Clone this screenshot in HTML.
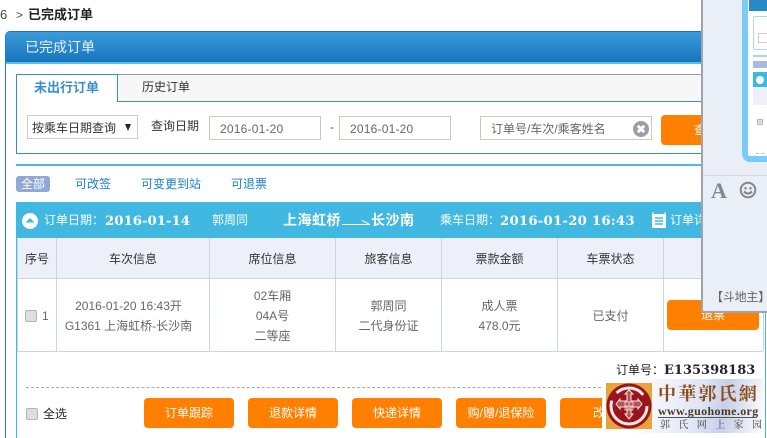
<!DOCTYPE html>
<html lang="zh"><head><meta charset="utf-8"><style>
html,body{margin:0;padding:0;background:#fff}
#p{position:relative;width:767px;height:438px;overflow:hidden;background:#fff;font:12px/16px "Liberation Sans","WenQuanYi Zen Hei","Noto Sans CJK SC",sans-serif;color:#333}
#p div,#p span.a{position:absolute;box-sizing:border-box;white-space:nowrap}
.t{height:16px;line-height:16px;text-align:center}
.g{color:#666}
.btn{background:#ff8000;color:#fff;border-radius:4px;text-align:center;height:30px;line-height:30px;width:90px;top:398px}
.line{background:#c4d8e6}
.inp{border:1px solid #ccc9c2;background:#fff;color:#666;height:24px;line-height:24px;top:116px}
.b{font-family:"DejaVu Serif",serif;font-weight:bold;font-size:13.300px}
.cb{width:12px;height:12px;border:1px solid #b4b4b4;border-radius:2px;background:#dedede}
</style></head><body><div id="p">

<div style="left:0;top:7px;color:#444;font-size:13px">6</div>
<div style="left:16px;top:7px;color:#555">&gt;</div>
<div style="left:28px;top:7px;font-size:13px;font-weight:bold;color:#222">已完成订单</div>

<div style="left:5px;top:31px;width:720px;height:33px;background:linear-gradient(#3a9cda,#1573bb);border-top:1px solid #1b72b4;border-radius:5px 0 0 0"></div>
<div style="left:6px;top:62px;width:720px;height:2px;background:#5cbfe9"></div>
<div style="left:5px;top:36px;width:1px;height:402px;background:#2180c4"></div>
<div style="left:25px;top:38px;font-size:14px;line-height:18px;color:#e6f3fb">已完成订单</div>

<div style="left:16px;top:74px;width:720px;height:28px;background:#f7f7f7;border-top:1px solid #999;border-bottom:1px solid #3a8cc8"></div>
<div style="left:16px;top:74px;width:102px;height:28px;background:#fff;border:1px solid #3a8cc8;border-bottom:0"></div>
<div style="left:34px;top:80px;font-weight:bold;font-size:13px;color:#3a8fd0">未出行订单</div>
<div style="left:142px;top:79px;color:#333">历史订单</div>
<div style="left:16px;top:102px;width:1px;height:52px;background:#3a8cc8"></div>
<div style="left:16px;top:153px;width:720px;height:1px;background:#3a8cc8"></div>
<div style="left:16px;top:164px;width:720px;height:2px;background:#4db9e2"></div>

<div style="left:27px;top:115px;width:111px;height:24px;border:1px solid #ccc;line-height:24px;padding-left:4px;color:#333">按乘车日期查询</div>
<div style="left:125px;top:124px;width:0;height:0;border:3.500px solid transparent;border-top:7px solid #222;border-bottom:0"></div>
<div style="left:151px;top:118px;color:#333">查询日期</div>
<div class="inp" style="left:209px;width:112px;padding-left:10px;letter-spacing:.2px">2016-01-20</div>
<div style="left:330px;top:119px;color:#555">-</div>
<div class="inp" style="left:339px;width:112px;padding-left:10px;letter-spacing:.2px">2016-01-20</div>
<div class="inp" style="left:480px;width:172px;padding-left:10px">订单号/车次/乘客姓名</div>
<svg style="position:absolute;left:633px;top:121px" width="16" height="16"><circle cx="8" cy="8" r="8" fill="#9a9ea8"/><path d="M4.800 4.800 11.200 11.200M11.200 4.800 4.800 11.200" stroke="#fff" stroke-width="3"/></svg>
<div style="left:661px;top:115px;width:80px;height:30px;background:#ff8000;border-radius:4px;color:#fff;line-height:30px;padding-left:33px">查询</div>

<div style="left:16px;top:176px;width:34px;height:16px;background:#8fa8d8;border-radius:3px;color:#fff;text-align:center">全部</div>
<div style="left:75px;top:176px;color:#1b7fc4">可改签</div>
<div style="left:141px;top:176px;color:#1b7fc4">可变更到站</div>
<div style="left:231px;top:176px;color:#1b7fc4">可退票</div>

<div style="left:16px;top:202px;width:720px;height:36px;background:#41b8e2"></div>
<svg style="position:absolute;left:22px;top:213px" width="16" height="16"><circle cx="8" cy="8" r="8" fill="#fff"/><path d="M3.500 9.500 8 5l4.500 4.500z" fill="#41b8e2"/></svg>
<div style="left:44px;top:212px;color:#fff">订单日期：</div>
<div class="b" style="left:105px;top:214px;color:#fff">2016-01-14</div>
<div style="left:212px;top:212px;color:#fff">郭周同</div>
<div style="left:283px;top:212px;color:#fff;font-weight:bold;font-size:14px;letter-spacing:.5px">上海虹桥</div>
<svg style="position:absolute;left:341px;top:216px" width="30" height="10" fill="none" stroke="#fff"><path d="M1 8.500H29M21 4.500l7 3.500"/></svg>
<div style="left:371px;top:212px;color:#fff;font-weight:bold;font-size:14px;letter-spacing:.5px">长沙南</div>
<div style="left:440px;top:212px;color:#fff">乘车日期：</div>
<div class="b" style="left:500px;top:214px;color:#fff;letter-spacing:.2px">2016-01-20 16:43</div>
<svg style="position:absolute;left:652px;top:212px" width="14" height="16"><path d="M0 2h14v14H0z" fill="#fff"/><path d="M1 0v3M13 0v3" stroke="#fff"/><path d="M3 6h8M3 9h8M3 12h8" stroke="#41b8e2" stroke-width="1.500"/></svg>
<div style="left:670px;top:212px;color:#fff">订单详情</div>

<div style="left:17px;top:238px;width:720px;height:40px;background:#edf0f8"></div>
<div class="line" style="left:17px;top:278px;width:746px;height:1px"></div>
<div class="line" style="left:17px;top:351px;width:746px;height:1px"></div>
<div class="line" style="left:17px;top:238px;width:1px;height:113px"></div>
<div class="line" style="left:56px;top:238px;width:1px;height:113px"></div>
<div class="line" style="left:209px;top:238px;width:1px;height:113px"></div>
<div class="line" style="left:335px;top:238px;width:1px;height:113px"></div>
<div class="line" style="left:441px;top:238px;width:1px;height:113px"></div>
<div class="line" style="left:557px;top:238px;width:1px;height:113px"></div>
<div class="line" style="left:663px;top:238px;width:1px;height:113px"></div>
<div class="line" style="left:763px;top:238px;width:1px;height:113px"></div>
<div style="left:16px;top:238px;width:1px;height:200px;background:#41b8e2"></div>
<div style="left:765px;top:238px;width:1px;height:200px;background:#41b8e2"></div>

<div class="t" style="left:18px;top:251px;width:38px">序号</div>
<div class="t" style="left:57px;top:251px;width:152px">车次信息</div>
<div class="t" style="left:210px;top:251px;width:125px">席位信息</div>
<div class="t" style="left:336px;top:251px;width:105px">旅客信息</div>
<div class="t" style="left:442px;top:251px;width:115px">票款金额</div>
<div class="t" style="left:558px;top:251px;width:105px">车票状态</div>

<div class="cb" style="left:25px;top:310px"></div>
<div class="g" style="left:42px;top:308px">1</div>
<div class="t g" style="left:57px;top:298px;width:143px">2016-01-20 16:43开</div>
<div class="t g" style="left:57px;top:318px;width:143px">G1361 上海虹桥-长沙南</div>
<div class="t g" style="left:210px;top:288px;width:125px">02车厢</div>
<div class="t g" style="left:210px;top:308px;width:125px">04A号</div>
<div class="t g" style="left:210px;top:328px;width:125px">二等座</div>
<div class="t g" style="left:336px;top:298px;width:105px">郭周同</div>
<div class="t g" style="left:336px;top:318px;width:105px">二代身份证</div>
<div class="t g" style="left:442px;top:298px;width:115px">成人票</div>
<div class="t g" style="left:442px;top:318px;width:115px">478.0元</div>
<div class="t g" style="left:558px;top:308px;width:105px">已支付</div>
<div class="btn" style="left:667px;top:300px;width:92px">退票</div>

<div style="left:616px;top:362px;color:#222">订单号：</div>
<div class="b" style="left:664px;top:363px;color:#223;font-size:13px">E135398183</div>
<div style="left:26px;top:387px;width:600px;height:0;border-top:1px dashed #aaa"></div>
<div class="cb" style="left:26px;top:408px"></div>
<div style="left:43px;top:406px;color:#222">全选</div>
<div class="btn" style="left:144px">订单跟踪</div>
<div class="btn" style="left:248px">退款详情</div>
<div class="btn" style="left:352px">快递详情</div>
<div class="btn" style="left:456px">购/赠/退保险</div>
<div class="btn" style="left:560px">改签</div>

<!-- chat panel: inner coords = x-703, y+5 -->
<div style="left:701px;top:-5px;width:80px;height:318px;background:#e9eef7;border:1px solid #a0a3ac;border-width:0 0 2px 2px;border-bottom-left-radius:3px;overflow:hidden">
  <div style="left:39px;top:0;width:60px;height:167px;background:#fff;border:6px solid #7acbf8;border-top:0;border-radius:0 0 0 8px"></div>
  <div style="left:46px;top:0;width:40px;height:16px;background:#2a88c8"></div>
  <div style="left:50px;top:21px;width:40px;height:34px;border:1px solid #b0d8f0;border-radius:2px"></div>
  <div style="left:55px;top:38px;width:20px;height:10px;border:1px solid #ccc"></div>
  <div style="left:50px;top:60px;width:40px;height:2px;background:#a0dcf0"></div>
  <div style="left:50px;top:66px;width:16px;height:7px;background:#a8b8e0"></div>
  <div style="left:50px;top:77px;width:40px;height:15px;background:#41b8e2"></div>
  <div style="left:53px;top:81px;width:8px;height:8px;background:#fff;border-radius:50%"></div>
  <div style="left:50px;top:93px;width:40px;height:17px;background:#edf0f8"></div>
  <div style="left:54px;top:124px;width:6px;height:6px;background:#ddd;border:1px solid #bbb"></div>
  <div style="left:53px;top:158px;width:30px;height:0;border-top:1px dashed #bbb"></div>
  <div style="left:0;top:180px;width:80px;height:1px;background:#d3d7e0"></div>
  <div style="left:8px;top:183px;font:bold 22px/25px 'Liberation Serif',serif;color:#85878c">A</div>
  <svg style="position:absolute;left:36px;top:186px" width="18" height="18" fill="none" stroke="#85878c" stroke-width="2"><circle cx="9" cy="9" r="7.300"/><path d="M5 10.500q4 4 8 0" /><path d="M6.500 6v2.500M11.500 6v2.500"/></svg>
  <div style="left:8px;top:294px;color:#666;letter-spacing:-.2px">【斗地主】</div>
</div>

<!-- logo -->
<div style="left:602px;top:379px;width:161px;height:54px;background:linear-gradient(100deg,#fff 20%,#dfe5f5 60%,#c7d0ea 75%,#fff 100%);overflow:hidden">
  <div style="left:4px;top:4px;width:46px;height:46px;background:#e8a33a"></div>
  <svg style="position:absolute;left:4px;top:4px" width="46" height="46"><circle cx="23" cy="23" r="22.500" fill="#9a1420"/><circle cx="23" cy="23" r="18" fill="none" stroke="#f3e9e0" stroke-width="3" stroke-dasharray="62 9 30 12"/><path d="M23 7l4 4h-2v7h7v-2l4 5-4 5v-2h-7v7h2l-4 5-4-5h2v-7h-7v2l-4-5 4-5v2h7v-7h-2z" fill="#b5525a" stroke="#f5e8e0" stroke-width="1"/><path d="M19 19h8v8h-8zM23 19v8M19 23h8" fill="none" stroke="#f5e8e0" stroke-width=".8"/></svg>
  <div style="left:56px;top:3px;font:bold 18px/22px 'Noto Serif CJK SC',serif;color:#8a4d1a;letter-spacing:2.200px">中華郭氏網</div>
  <div style="left:56px;top:26px;font:bold 12px/12px 'Liberation Serif',serif;color:#4a3a20;letter-spacing:.35px">www.guohome.org</div>
  <div style="left:56px;top:38px;width:99px;height:1px;background:#555"></div>
  <div style="left:58px;top:39px;font:10px/12px 'Noto Serif CJK SC',serif;color:#444;letter-spacing:8.400px">郭氏网上家园</div>
</div>
</div></body></html>
